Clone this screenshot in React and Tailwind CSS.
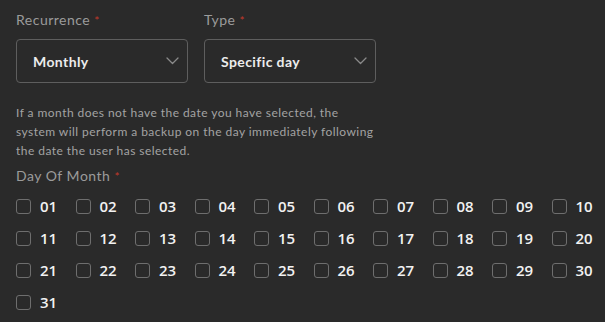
import React, { useState } from "react";

const Chevron = () => (
  <svg width="13" height="8" viewBox="0 0 13 8" fill="none" className="shrink-0">
    <path d="M1 1l5.5 5.5L12 1" stroke="#8a8a8a" strokeWidth="1.3" strokeLinecap="round" strokeLinejoin="round" />
  </svg>
);

function Select({ value }) {
  return (
    <div className="h-[44px] w-[172px] rounded-[4px] border border-[#5e5e5e] flex items-center justify-between pl-[16px] pr-[8px]">
      <span className="text-[14px] font-bold tracking-[0.4px] text-[#ececec]">{value}</span>
      <Chevron />
    </div>
  );
}

function Label({ children }) {
  return (
    <div className="h-[20px] leading-[20px] text-[14px] tracking-[0.5px] text-[#9b9b9b]">
      {children} <span className="text-[#c0392b] text-[12px]">*</span>
    </div>
  );
}

export default function App() {
  const days = Array.from({ length: 31 }, (_, i) => String(i + 1).padStart(2, "0"));
  const [checked, setChecked] = useState({});

  return (
    <div className="w-[605px] h-[322px] bg-[#2a2a2a] pl-[16px] pt-[10px] overflow-hidden" style={{ fontFamily: "Lato, 'Open Sans', sans-serif" }}>
      <div className="flex gap-[16px]">
        <div>
          <Label>Recurrence</Label>
          <div className="mt-[9px]"><Select value="Monthly" /></div>
        </div>
        <div>
          <Label>Type</Label>
          <div className="mt-[9px]"><Select value="Specific day" /></div>
        </div>
      </div>

      <p className="mt-[20px] whitespace-nowrap text-[12px] leading-[19px] tracking-[0.45px] text-[#a3a3a3]">
        If a month does not have the date you have selected, the<br />
        system will perform a backup on the day immediately following<br />
        the date the user has selected.
      </p>

      <div className="mt-[6px]">
        <Label>Day Of Month</Label>
      </div>

      <div className="mt-[4px] grid grid-cols-[repeat(10,59.5px)]">
        {days.map(d => (
          <label key={d} className="h-[32px] flex items-center gap-[9px] cursor-pointer">
            <span
              onClick={() => setChecked(c => ({ ...c, [d]: !c[d] }))}
              className={"w-[15px] h-[15px] rounded-[3px] border-[1.5px] border-[#6e6e6e] " + (checked[d] ? "bg-[#6e6e6e]" : "")}
            />
            <span className="text-[15px] font-semibold text-[#f2f2f2]" style={{ fontFamily: "'Open Sans', sans-serif" }}>{d}</span>
          </label>
        ))}
      </div>
    </div>
  );
}
